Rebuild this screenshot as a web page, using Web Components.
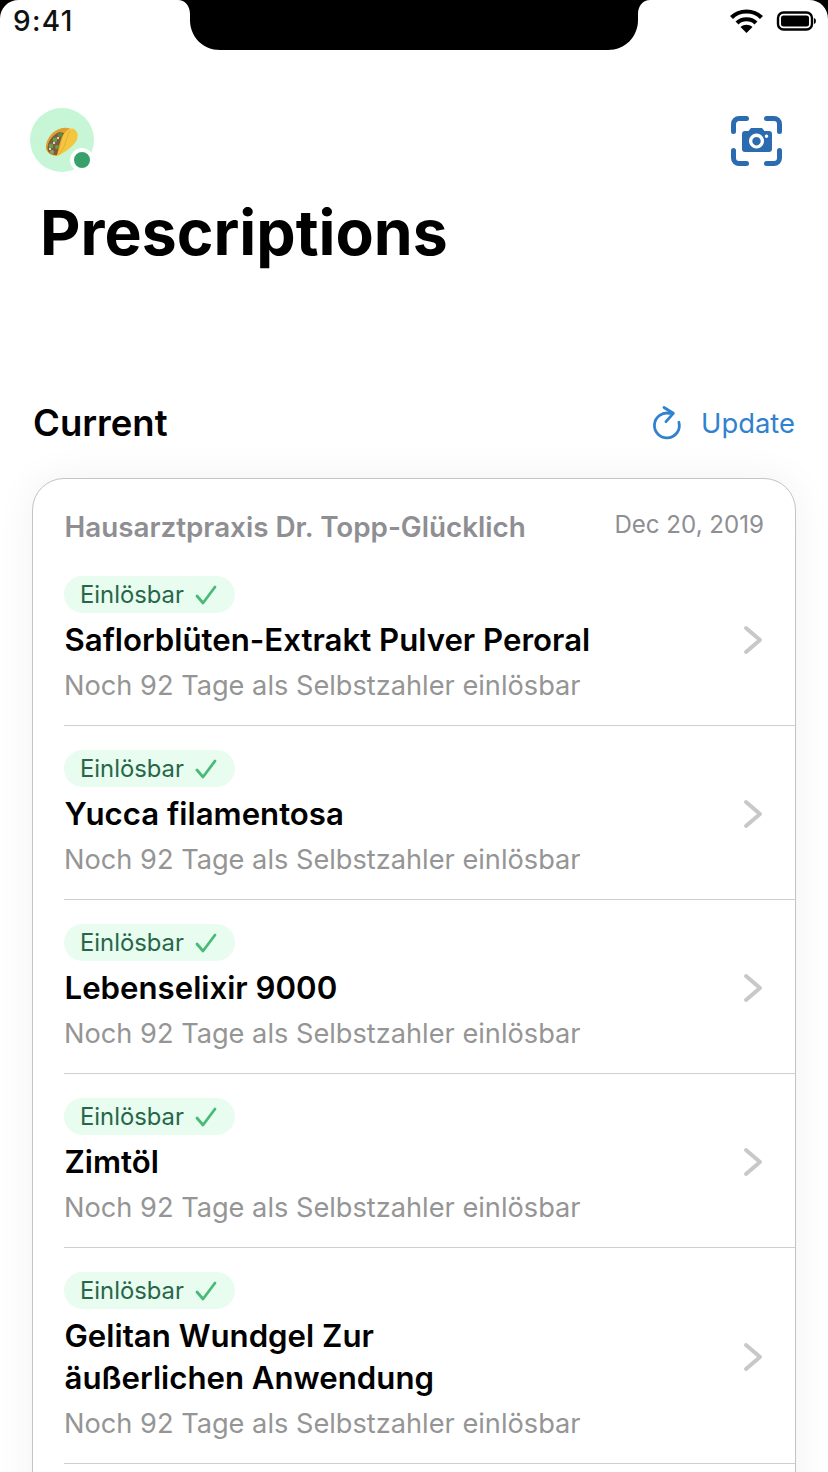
<!DOCTYPE html>
<html><head><meta charset="utf-8"><style>
html,body{margin:0;padding:0;height:1472px;overflow:hidden;background:#fff;font-family:Inter,"Noto Sans",sans-serif}
</style></head><body>
<app-screen>
<status-bar></status-bar>
<top-bar></top-bar>
<page-title>Prescriptions</page-title>
<section-head>Current</section-head>
<rx-card practice="Hausarztpraxis Dr. Topp-Glücklich" date="Dec 20, 2019">
<rx-row>Saflorblüten-Extrakt Pulver Peroral</rx-row>
<rx-row>Yucca filamentosa</rx-row>
<rx-row>Lebenselixir 9000</rx-row>
<rx-row>Zimtöl</rx-row>
<rx-row>Gelitan Wundgel Zur<br>äußerlichen Anwendung</rx-row>
</rx-card>
</app-screen>
<script>
function def(name,html){customElements.define(name,class extends HTMLElement{connectedCallback(){if(this.shadowRoot)return;const s=this.attachShadow({mode:'open'});s.innerHTML=typeof html==='function'?html(this):html;}});}
def('app-screen',`<style>:host{display:block;width:828px;height:1472px;overflow:hidden;background:#fff}</style><slot></slot>`);
def('status-bar',`<style>
:host{display:flex;height:50px;justify-content:space-between;position:relative;font-family:Inter,sans-serif}
.time{font-size:28px;font-weight:500;color:#111;letter-spacing:1.3px;margin:5px 0 0 13px;line-height:32px;position:relative}
.mask{position:absolute;left:0;top:0}
.icons{display:flex;gap:11px;margin:8px 0 0 0;padding-right:11px;align-items:flex-start;position:relative}
</style><svg class="mask" width="828" height="50" viewBox="0 0 828 50"><path d="M178 0C185 0 190 6 190 14V20C190 37 203 50 220 50H608C625 50 638 37 638 20V14C638 6 643 0 650 0Z" fill="#000"/><path d="M0 0H19C8 0 0 8 0 19Z" fill="#000"/><path d="M828 0V19C828 8 820 0 809 0Z" fill="#000"/></svg>
<span class="time">9:41</span>
<div class="icons">
<svg width="34" height="26" viewBox="0 0 34 26"><path d="M1.5 9.5C9.5 1.5 23.5 1.500 31.5 9.500" fill="none" stroke="#000" stroke-width="4.2"/><path d="M7 15C12 10 21 10 26 15" fill="none" stroke="#000" stroke-width="4.2"/><path d="M16.5 25L10.5 19C14 16 19 16 22.5 19Z" fill="#000"/></svg>
<svg width="42" height="22" viewBox="0 0 42 22" style="margin-top:3px"><rect x="3" y="1.5" width="34" height="17" rx="5.5" fill="none" stroke="#000" stroke-width="2.4"/><rect x="6" y="4.5" width="28" height="11" rx="2.5" fill="#000"/><path d="M39 7c2.500.6 2.500 5.400 0 6z" fill="#000"/></svg>
</div>`);
def('top-bar',`<style>
:host{display:flex;justify-content:space-between;padding:58px 45px 0 30px;height:64px}
.av{width:64px;height:64px;border-radius:50%;background:#c6f6d5;position:relative}
.dot{position:absolute;right:0;bottom:0;width:16px;height:16px;background:#38a169;border:4px solid #fff;border-radius:50%}
.taco{position:absolute;left:15px;top:19px}
.cam{margin-top:8px}
</style>
<div class="av"><svg class="taco" width="34" height="31" viewBox="0 0 34 31">
<path d="M1 22C0 14 6 5 14 2C18 .5 22 .5 25 1.5L12 29C8 29 3 27 1 22Z" fill="#e0a030"/>
<path d="M3 24C1 17 6 9 14 5L19 6C15 12 14 20 12 28C8 28 5 27 3 24Z" fill="#7d5a38"/>
<circle cx="6" cy="19" r="2.400" fill="#6a9a4c"/><circle cx="10" cy="13" r="2.400" fill="#6a9a4c"/><circle cx="15" cy="8" r="2.400" fill="#5b8d42"/><circle cx="7" cy="25" r="2" fill="#86a860"/><circle cx="12" cy="20" r="2" fill="#6a9a4c"/><circle cx="13.500" cy="14" r="1.600" fill="#7d5a38"/>
<circle cx="9" cy="16" r="1.100" fill="#f2f2f2"/><circle cx="5" cy="22" r="1.100" fill="#f2f2f2"/><circle cx="13" cy="11" r="1.100" fill="#f2f2f2"/><circle cx="10" cy="24" r="1.100" fill="#a8483a"/>
<path d="M11 29.5C15 25 15.500 15 18 9C20 4 24 1 27 1.500C31 2 33.500 6 32.500 11C31 17 22 25 11 29.5Z" fill="#f4c63f"/>
<path d="M13 28C20 22 21 11 25 4" fill="none" stroke="#e3a72e" stroke-width=".8"/>
</svg><div class="dot"></div></div>
<svg class="cam" width="52" height="50" viewBox="0 0 52 50"><g fill="none" stroke="#2b6cb0" stroke-width="5" stroke-linecap="round"><path d="M15.500 2.500H8a5.500 5.500 0 0 0-5.500 5.500v7.500"/><path d="M35.500 2.500H43a5.500 5.500 0 0 1 5.500 5.500v7.500"/><path d="M2.500 34.500V42a5.500 5.500 0 0 0 5.500 5.500h7.500"/><path d="M48.500 34.500V42a5.500 5.500 0 0 1-5.500 5.500h-7.500"/></g>
<path fill="#2b6cb0" fill-rule="evenodd" d="M14 15h3.500l2.500-3h11l2.500 3h4.500a3 3 0 0 1 3 3v15a3 3 0 0 1-3 3H14a3 3 0 0 1-3-3V18a3 3 0 0 1 3-3zM25.500 17.500a7.500 7.500 0 1 0 .01 0zM25.500 21a4.200 4.200 0 1 1-.01 0zM35.500 18.500a1.700 1.700 0 1 0 .01 0z"/></svg>`);
def('page-title',`<style>:host{display:block;font:700 62.5px/72px Inter,sans-serif;color:#000;margin:24px 0 0 40px;letter-spacing:0}</style><slot></slot>`);
def('section-head',`<style>:host{display:flex;justify-content:space-between;align-items:center;margin:133px 33px 0 33px;height:44px}
.t{font:600 36.5px/44px Inter,sans-serif;color:#000}
.u{display:flex;align-items:center;gap:18px;color:#3182ce;font:400 27.4px/34px Inter,sans-serif}
</style><span class="t"><slot></slot></span><span class="u"><svg width="32" height="36" viewBox="0 0 32 36" style="margin-top:2px"><path d="M19 7.450A12.450 12.450 0 1 0 27.900 16.300" fill="none" stroke="#3182ce" stroke-width="2.800" stroke-linecap="round"/><path d="M13 1.500L22.300 7.300L15 15.700" fill="none" stroke="#3182ce" stroke-width="2.800" stroke-linecap="round" stroke-linejoin="round"/></svg><span>Update</span></span>`);
def('rx-card',el=>`<style>:host{display:block;box-sizing:border-box;margin:33px 32px 0;width:764px;height:1100px;background:#fff;border:1px solid #c4c4c4;border-radius:32px 32px 0 0;box-shadow:0 0 40px rgba(0,0,0,.06);padding:31px 0 0 31px}
.h{display:flex;justify-content:space-between;align-items:flex-start;padding-right:31px;height:66px}
.p{font:600 27.8px/34px Inter,sans-serif;color:#8e8e93;margin-left:.5px}.d{font:400 24.1px/30px Inter,sans-serif;color:#8e8e93}
</style><div class="h"><span class="p">${el.getAttribute('practice')}</span><span class="d">${el.getAttribute('date')}</span></div><slot></slot>`);
def('rx-row',`<style>:host{display:flex;align-items:center;justify-content:space-between;box-sizing:border-box;border-bottom:1px solid #cfcfcf;padding:0 32px 22px 0;margin-bottom:24px}
.b{display:inline-flex;align-items:center;gap:10px;height:37px;width:171px;padding:0 0 0 16px;background:#e8fcef;border-radius:19px;color:#276749;font:400 23.8px/30px Inter,sans-serif;box-sizing:border-box}
.t{font:600 31.2px/42px Inter,sans-serif;color:#000;margin:6px 0 0 .5px}
.s{font:400 27.2px/34px Inter,sans-serif;color:#959595;margin:8px 0 0 0}
.c{margin-left:1px}
</style><div><span class="b">Einlösbar <svg class="c" width="22" height="20" viewBox="0 0 22 20"><path d="M2 11l6 7L20 2" fill="none" stroke="#48bb78" stroke-width="2.800" stroke-linecap="round" stroke-linejoin="round"/></svg></span>
<div class="t"><slot></slot></div><div class="s">Noch 92 Tage als Selbstzahler einlösbar</div></div>
<svg width="20" height="30" viewBox="0 0 20 30"><path d="M3 3l14 12L3 27" fill="none" stroke="#c8c8c8" stroke-width="4" stroke-linecap="round" stroke-linejoin="round"/></svg>`);
</script>
</body></html>
